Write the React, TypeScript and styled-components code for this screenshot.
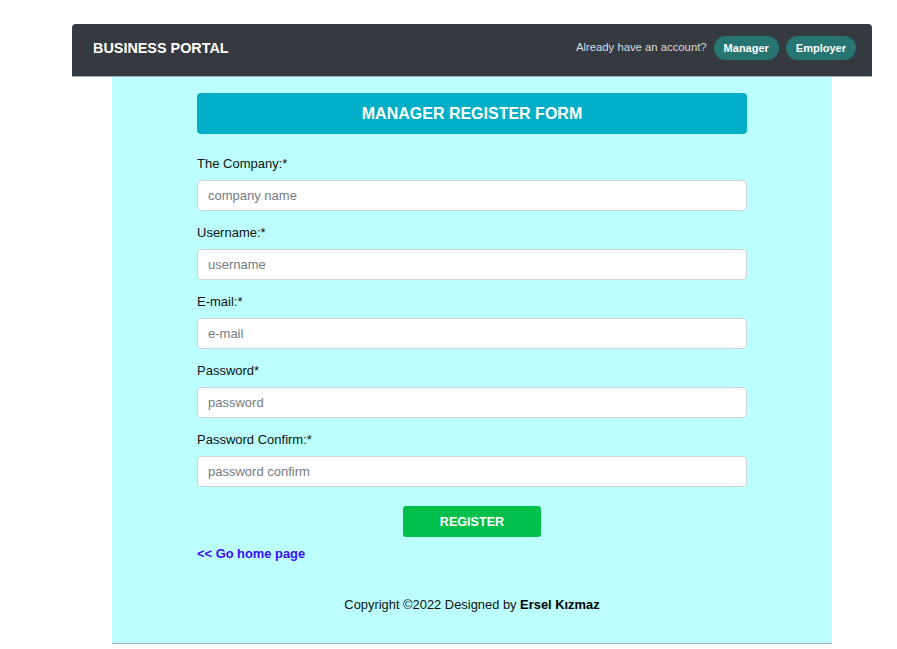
import React from "react";
import styled, { createGlobalStyle } from "styled-components";

const Global = createGlobalStyle`
  html, body { margin: 0; padding: 0; background: #ffffff; }
  body { font-family: "Liberation Sans", Arial, sans-serif; }
  * { box-sizing: border-box; }
`;

const Page = styled.div`
  padding: 24px 0 0 72px;
  display: flex;
  flex-direction: column;
  align-items: flex-start;
`;

const Navbar = styled.header`
  width: 800px;
  height: 53px;
  background: #343a40;
  border-radius: 4px 4px 0 0;
  border-bottom: 1px solid #a9adbd;
  display: flex;
  align-items: center;
  justify-content: space-between;
  padding: 0 16px 4px 21px;
`;

const Brand = styled.div`
  color: #ffffff;
  font-weight: 700;
  font-size: 14.4px;
`;

const NavRight = styled.div`
  display: flex;
  align-items: center;
  gap: 7px;
`;

const NavText = styled.span`
  color: #d9dce3;
  font-size: 11.3px;
  margin-top: -2px;
`;

const PillButton = styled.button`
  height: 24px;
  padding: 0 10px;
  border: none;
  border-radius: 12px;
  background: #277570;
  color: #ffffff;
  font-family: "Liberation Sans", Arial, sans-serif;
  font-weight: 700;
  font-size: 11px;
  cursor: pointer;
`;

const Panel = styled.main`
  width: 720px;
  margin-left: 40px;
  background: #bbffff;
  border-bottom: 1px solid #a5aaaa;
  padding: 16px 85px 31px;
  display: flex;
  flex-direction: column;
`;

const Title = styled.h1`
  margin: 0 0 22px;
  height: 41px;
  background: #00afc7;
  border-radius: 4px;
  color: #ffffff;
  font-size: 16px;
  font-weight: 700;
  display: flex;
  align-items: center;
  justify-content: center;
`;

const Field = styled.div`
  display: flex;
  flex-direction: column;
  margin-bottom: 14px;
`;

const Label = styled.label`
  font-size: 13px;
  line-height: 15px;
  color: #111;
  margin-bottom: 9px;
`;

const Input = styled.input`
  height: 31px;
  width: 100%;
  border: 1px solid #ced4da;
  border-radius: 4px;
  background: #ffffff;
  padding: 0 10px;
  font-family: "Liberation Sans", Arial, sans-serif;
  font-size: 13px;
  color: #333;
  outline: none;
  &::placeholder { color: #747b83; }
`;

const ButtonRow = styled.div`
  display: flex;
  justify-content: center;
  margin-top: 5px;
`;

const RegisterButton = styled.button`
  width: 138px;
  height: 31px;
  border: none;
  border-radius: 3px;
  background: #00c04b;
  color: #ffffff;
  font-family: "Liberation Sans", Arial, sans-serif;
  font-weight: 700;
  font-size: 12.6px;
  cursor: pointer;
`;

const HomeLink = styled.a`
  margin-top: 9px;
  align-self: flex-start;
  color: #3c0cff;
  font-weight: 700;
  font-size: 12.9px;
  line-height: 15px;
  text-decoration: none;
`;

const Footer = styled.footer`
  margin-top: 36px;
  text-align: center;
  font-size: 12.9px;
  line-height: 15px;
  color: #111;
  & b { color: #000; }
`;

const fields = [
  { label: "The Company:*", placeholder: "company name", type: "text" },
  { label: "Username:*", placeholder: "username", type: "text" },
  { label: "E-mail:*", placeholder: "e-mail", type: "email" },
  { label: "Password*", placeholder: "password", type: "password" },
  { label: "Password Confirm:*", placeholder: "password confirm", type: "password" },
];

export default function App() {
  return (
    <>
      <Global />
      <Page>
        <Navbar>
          <Brand>BUSINESS PORTAL</Brand>
          <NavRight>
            <NavText>Already have an account?</NavText>
            <PillButton>Manager</PillButton>
            <PillButton>Employer</PillButton>
          </NavRight>
        </Navbar>
        <Panel>
          <Title>MANAGER REGISTER FORM</Title>
          {fields.map((f) => (
            <Field key={f.label}>
              <Label>{f.label}</Label>
              <Input type={f.type} placeholder={f.placeholder} />
            </Field>
          ))}
          <ButtonRow>
            <RegisterButton>REGISTER</RegisterButton>
          </ButtonRow>
          <HomeLink href="#">&lt;&lt; Go home page</HomeLink>
          <Footer>
            Copyright ©2022 Designed by <b>Ersel Kızmaz</b>
          </Footer>
        </Panel>
      </Page>
    </>
  );
}
